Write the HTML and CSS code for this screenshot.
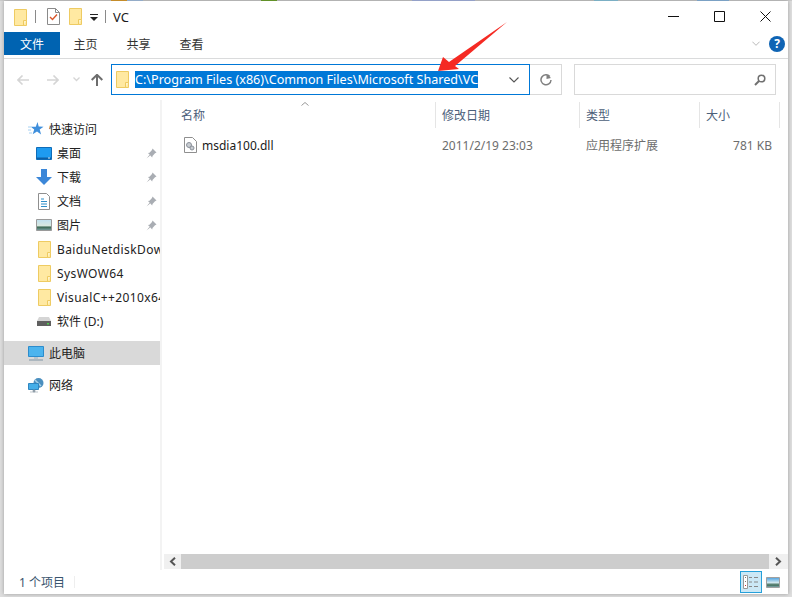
FILE: index.html
```html
<!DOCTYPE html>
<html lang="zh-CN">
<head>
    <meta charset="UTF-8">
    <title>VC</title>
    <link rel="stylesheet" href="styles.css">
</head>
<body>
    <svg class="defs" width="0" height="0">
        <symbol id="folder" viewBox="0 0 13 17">
            <path d="M.5.5h12v16H.5z" fill="#ffe9a2" stroke="#eecb62"/>
            <path d="M9.5 16.5v-5h3" fill="#fff3c8" stroke="#eecb62"/>
        </symbol>
        <symbol id="pin" viewBox="0 0 11 11">
            <path d="M6.5.5l4 4-1.500.8-2.500 2.700-.3 1.500L2 5l1.500-.3L6 2z" fill="#a9adb3"/>
            <path d="M3.500 7L.5 10.500 4 7.500z" fill="#8d9096"/>
        </symbol>
    </svg>

    <div class="window">
        <div class="titlebar">
            <svg class="qa-folder" width="13" height="17"><use href="#folder"/></svg>
            <span class="qa-sep"></span>
            <svg class="qa-doc" width="13" height="17" viewBox="0 0 13 17">
                <path d="M.5.5h8l4 4v12H.5z" fill="#fff" stroke="#8a8a8a"/>
                <path d="M8.500.5v4h4" fill="none" stroke="#8a8a8a"/>
                <path d="M3 9l2.500 2.500L10 6.500" fill="none" stroke="#d9572b" stroke-width="1.400"/>
            </svg>
            <svg class="qa-folder2" width="13" height="17"><use href="#folder"/></svg>
            <svg class="qa-drop" width="8" height="7" viewBox="0 0 8 7">
                <path d="M0 0h8v1H0zM0 3h8L4 7z" fill="#222"/>
            </svg>
            <span class="qa-sep sep2"></span>
            <span class="title">VC</span>
            <div class="winbtns">
                <span class="winbtn"><svg width="11" height="11" viewBox="0 0 11 11"><path d="M0 5.500h11" stroke="#111" fill="none"/></svg></span>
                <span class="winbtn"><svg width="11" height="11" viewBox="0 0 11 11"><path d="M.5.5h10v10H.5z" stroke="#111" fill="none"/></svg></span>
                <span class="winbtn"><svg width="11" height="11" viewBox="0 0 11 11"><path d="M.5.5l10 10M10.500.5l-10 10" stroke="#111" fill="none"/></svg></span>
            </div>
        </div>

        <div class="ribbon">
            <span class="tab tab-file">文件</span>
            <span class="tab">主页</span>
            <span class="tab">共享</span>
            <span class="tab">查看</span>
            <svg class="rib-chev" width="8" height="5" viewBox="0 0 11 6"><path d="M.5.5l5 5 5-5" fill="none" stroke="#b5b5b5" stroke-width="1.300"/></svg>
            <span class="help">?</span>
        </div>

        <div class="navrow">
            <svg class="nav-back" width="12" height="10" viewBox="0 0 12 10"><path d="M5.500.5L1 5l4.500 4.500M1 5h11" fill="none" stroke="#d5d5d5" stroke-width="1.600"/></svg>
            <svg class="nav-fwd" width="12" height="10" viewBox="0 0 12 10"><path d="M6.500.5L11 5l-4.500 4.500M11 5H0" fill="none" stroke="#d5d5d5" stroke-width="1.600"/></svg>
            <svg class="nav-hist" width="7" height="5" viewBox="0 0 7 5"><path d="M.5.500l3 3 3-3" fill="none" stroke="#d5d5d5" stroke-width="1.300"/></svg>
            <svg class="nav-up" width="12" height="12" viewBox="0 0 12 12"><path d="M.7 6L6 .8 11.300 6M6 1v11" fill="none" stroke="#6d6d6d" stroke-width="2"/></svg>
            <div class="address">
                <svg class="addr-folder" width="13" height="17"><use href="#folder"/></svg>
                <span class="addr-text">C:\Program Files (x86)\Common Files\Microsoft Shared\VC</span>
                <svg class="addr-chev" width="10" height="6" viewBox="0 0 10 6"><path d="M.5.500L5 5 9.500.5" fill="none" stroke="#555" stroke-width="1.100"/></svg>
            </div>
            <div class="refresh">
                <svg width="12" height="12" viewBox="0 0 12 12"><path d="M9.800 2.500A5 5 0 1 0 11 6" fill="none" stroke="#808080" stroke-width="1.500"/><path d="M6.500 0v5l4.500-1z" fill="#808080"/></svg>
            </div>
            <div class="search">
                <svg width="12" height="12" viewBox="0 0 12 12"><circle cx="7.500" cy="4.500" r="3.300" fill="none" stroke="#707070" stroke-width="1.500"/><path d="M5 7l-4 4" stroke="#707070" stroke-width="2"/></svg>
            </div>
        </div>

        <div class="main">
            <div class="sidebar">
                <div class="navitem top">
                    <svg width="16" height="14" viewBox="0 0 16 14"><path d="M9.500 0l1.200 4.500 4.800.2-3.800 2.900 1.400 4.900L9 9.600l-4.300 2.600 1.500-4.700L2.800 4.700h5z" fill="#3f8fdc"/><path d="M0 5h3M0 8h3M1 11h3" stroke="#a5d0f2"/></svg>
                    <span>快速访问</span>
                </div>
                <div class="navitem">
                    <svg width="16" height="13" viewBox="0 0 16 13"><path d="M.5.5h15v12H.5z" fill="#1e9bf0" stroke="#0f6cb8"/><path d="M1 10.500h14V12H1z" fill="#0d5fa5"/><path d="M12 11h2" stroke="#cfe9fb"/></svg>
                    <span>桌面</span>
                    <svg class="pin" width="11" height="11"><use href="#pin"/></svg>
                </div>
                <div class="navitem">
                    <svg width="16" height="16" viewBox="0 0 16 16"><path d="M5 0h6v8h5l-8 8-8-8h5z" fill="#3c87d8"/></svg>
                    <span>下载</span>
                    <svg class="pin" width="11" height="11"><use href="#pin"/></svg>
                </div>
                <div class="navitem">
                    <svg width="16" height="17" viewBox="0 0 16 17"><path d="M2.500.5h8l3 3v13h-11z" fill="#fff" stroke="#8f8f8f"/><path d="M5 6h3M5 8.500h6M5 11h6M5 13.500h6" stroke="#2f8fc9"/></svg>
                    <span>文档</span>
                    <svg class="pin" width="11" height="11"><use href="#pin"/></svg>
                </div>
                <div class="navitem">
                    <svg width="16" height="12" viewBox="0 0 16 12"><defs><linearGradient id="pic" x1="0" y1="0" x2="0" y2="1"><stop offset="0" stop-color="#bfe0f0"/><stop offset=".55" stop-color="#d8e8e0"/><stop offset=".7" stop-color="#3d6a55"/><stop offset="1" stop-color="#7fa3a8"/></linearGradient></defs><path d="M.5.5h15v11H.5z" fill="url(#pic)" stroke="#9a9a9a"/></svg>
                    <span>图片</span>
                    <svg class="pin" width="11" height="11"><use href="#pin"/></svg>
                </div>
                <div class="navitem">
                    <svg width="16" height="17" viewBox="0 0 16 17"><use href="#folder" x="2" width="13" height="17"/></svg>
                    <span class="latin">BaiduNetdiskDownload</span>
                </div>
                <div class="navitem">
                    <svg width="16" height="17" viewBox="0 0 16 17"><use href="#folder" x="2" width="13" height="17"/></svg>
                    <span class="latin">SysWOW64</span>
                </div>
                <div class="navitem">
                    <svg width="16" height="17" viewBox="0 0 16 17"><use href="#folder" x="2" width="13" height="17"/></svg>
                    <span class="latin">VisualC++2010x64</span>
                </div>
                <div class="navitem">
                    <svg width="16" height="9" viewBox="0 0 16 9"><path d="M3 0h10l2 4H1z" fill="#d5d5d5"/><path d="M1 4h14v5H1z" fill="#5f5f5f"/><path d="M11 6h2v1.500h-2z" fill="#4fd04f"/></svg>
                    <span>软件 (D:)</span>
                </div>
                <div class="navitem top group active">
                    <svg width="16" height="15" viewBox="0 0 16 15"><path d="M.5.500h15v10H.5z" fill="#4cb4ee" stroke="#2c8ccc"/><path d="M6 11h4v2H6z" fill="#b8c4cc"/><path d="M1 14h14" stroke="#98a8b4" stroke-width="1.400"/></svg>
                    <span>此电脑</span>
                </div>
                <div class="navitem top group">
                    <svg width="16" height="15" viewBox="0 0 16 15"><circle cx="10.500" cy="5" r="5" fill="#4b8fbf"/><path d="M7 2l6 6" stroke="#a8d2e8" stroke-width="1.500"/><path d="M.5 5.500h10v6H.5z" fill="#45aee8" stroke="#2f86c0"/><path d="M5 12h2v2H5zM2 14h8" fill="#90a0aa" stroke="#90a0aa" stroke-width=".6"/></svg>
                    <span>网络</span>
                </div>
            </div>

            <div class="content">
                <div class="colhead">
                    <svg class="sort" width="8" height="4" viewBox="0 0 8 4"><path d="M.5 3.500L4 .5l3.500 3" fill="none" stroke="#999"/></svg>
                    <span class="col col-name">名称</span>
                    <span class="col">修改日期</span>
                    <span class="col">类型</span>
                    <span class="col">大小</span>
                </div>
                <div class="filerow">
                    <span class="cell-name">
                        <svg width="13" height="16" viewBox="0 0 13 16"><path d="M.5.500h8l4 4v11H.5z" fill="#fff" stroke="#8f8f8f"/><circle cx="5" cy="8" r="2.500" fill="#c8cdd2" stroke="#8a9099"/><circle cx="8" cy="11" r="2" fill="#c8cdd2" stroke="#8a9099"/></svg>
                        msdia100.dll
                    </span>
                    <span class="cell">2011/2/19 23:03</span>
                    <span class="cell">应用程序扩展</span>
                    <span class="cell cell-size">781 KB</span>
                </div>
                <div class="hscroll">
                    <span class="sbtn"><svg width="7" height="9" viewBox="0 0 7 9"><path d="M6 .8L2 4.500 6 8.200" fill="none" stroke="#555" stroke-width="2"/></svg></span>
                    <span class="thumb"></span>
                    <span class="sbtn sbtn-r"><svg width="7" height="9" viewBox="0 0 7 9"><path d="M1 .8L5 4.500 1 8.200" fill="none" stroke="#555" stroke-width="2"/></svg></span>
                </div>
            </div>
        </div>

        <div class="statusbar">
            <span class="count">1 个项目</span>
            <span class="status-sep"></span>
            <span class="viewbtn">
                <svg width="16" height="14" viewBox="0 0 16 14"><path d="M.5.500h4v13h-4z" fill="#fff" stroke="#999"/><path d="M2 2.500h1M2 6.500h1" stroke="#777"/><path d="M2 10.500h1" stroke="#c33"/><path d="M6 2.500h3M11 2.500h4M6 7h3M11 7h4M6 11.500h3M11 11.500h4" stroke="#888"/></svg>
            </span>
            <span class="viewbtn2">
                <svg width="14" height="11" viewBox="0 0 14 11"><defs><linearGradient id="pic2" x1="0" y1="0" x2="0" y2="1"><stop offset="0" stop-color="#4aa0e0"/><stop offset=".5" stop-color="#cfe6ee"/><stop offset=".75" stop-color="#3d6a55"/><stop offset="1" stop-color="#8fb5c0"/></linearGradient></defs><path d="M.5.500h13v10H.5z" fill="url(#pic2)" stroke="#a0a0a0"/></svg>
            </span>
        </div>

        <svg class="arrow" width="80" height="60" viewBox="0 0 80 60">
            <path d="M1 50L6 36l6 5L70 1 18 45l4 3z" fill="#f52a23"/>
        </svg>
    </div>
</body>
</html>
```

FILE: styles.css
```css
html, body { height: 100%; }
body { margin: 0; overflow: hidden; background: linear-gradient(90deg, #ccc 14%, #e0a030 14% 16%, #a9c4e4 16% 18%, #ccc 18% 33%, #6fa52e 33% 35%, #ccc 35% 52%, #a9b8e4 52% 60%, #ccc 60% 75%, #8cc8e0 75% 78%, #ccc 78% 88%, #8cb8e0 88% 92%, #ccc 92%) top / 100% 1px no-repeat, #dedede; font-family: "Noto Sans", "Noto Sans CJK SC", sans-serif; font-size: 12px; color: #1a1a1a; }
.defs { position: absolute; }
svg { display: block; flex: none; }

.window { position: relative; display: flex; flex-direction: column; box-sizing: border-box; width: 784px; height: 593px; margin: 1px 0 0 4px; background: #fff; box-shadow: 0 0 4px rgba(0, 0, 0, .3); }

/* title bar */
.titlebar { display: flex; align-items: center; height: 31px; padding-left: 10px; }
.qa-folder { margin-top: 1px; }
.qa-sep { width: 1px; height: 13px; margin-left: 8px; background: #8a8a8a; }
.qa-doc { margin-left: 11px; }
.qa-folder2 { margin-left: 9px; }
.qa-drop { margin-left: 8px; margin-top: 2px; }
.sep2 { margin-left: 7px; }
.title { margin-left: 7px; font-size: 13px; }
.winbtns { display: flex; margin-left: auto; }
.winbtn { display: flex; align-items: center; justify-content: center; width: 46px; height: 31px; }

/* ribbon tabs */
.ribbon { display: flex; align-items: center; height: 23px; padding-bottom: 3px; border-bottom: 1px solid #dadbdc; }
.tab { display: flex; align-items: center; justify-content: center; width: 53px; height: 23px; color: #333; }
.tab-file { width: 56px; margin-right: -1px; background: #0063b1; color: #fff; }
.rib-chev { margin-left: auto; }
.help { width: 16px; height: 16px; margin: 0 3px 0 9px; border-radius: 50%; background: #0f64b4; color: #fff; font-weight: 700; font-size: 12px; line-height: 16px; text-align: center; }

/* address row */
.navrow { display: flex; align-items: center; height: 31px; margin-top: 5px; }
.nav-back { margin-left: 13px; }
.nav-fwd { margin-left: 18px; }
.nav-hist { margin-left: 14px; }
.nav-up { margin-left: 11px; }
.address { display: flex; align-items: center; box-sizing: border-box; width: 419px; height: 31px; margin-left: 8px; border: 1px solid #0078d7; }
.addr-folder { margin-left: 4px; }
.addr-text { margin-left: 6px; padding: 0; background: #0078d7; color: #fff; font-size: 12.6px; line-height: 17px; white-space: nowrap; }
.addr-chev { margin-left: auto; margin-right: 10px; }
.refresh { display: flex; align-items: center; justify-content: center; box-sizing: border-box; width: 32px; height: 31px; border: 1px solid #d9d9d9; border-left: 0; }
.search { display: flex; align-items: center; justify-content: flex-end; box-sizing: border-box; width: 202px; height: 31px; margin-left: 12px; padding-right: 9px; border: 1px solid #d9d9d9; }

/* main area */
.main { display: flex; flex: 1; min-height: 0; margin-top: 5px; }
.sidebar { box-sizing: border-box; width: 158px; padding-top: 17px; border-right: 2px solid #f3f3f3; }
.navitem { display: flex; align-items: center; gap: 5px; box-sizing: border-box; width: 156px; height: 24px; padding: 0 3px 0 32px; overflow: hidden; white-space: nowrap; color: #222; }
.navitem.top { padding-left: 24px; }
.navitem.group { margin-top: 8px; }
.navitem.active { background: #d9d9d9; }
.latin { letter-spacing: .4px; }
.pin { margin-left: auto; }

.content { position: relative; display: flex; flex-direction: column; flex: 1; min-width: 0; }
.colhead { display: grid; grid-template-columns: 274px 144px 120px 80px; height: 26px; margin: 2px 0 4px; color: #4c607a; }
.col { display: flex; align-items: center; padding-left: 6px; border-right: 1px solid #e5e5e5; }
.col-name { padding-left: 19px; }
.sort { position: absolute; left: 139px; top: 2px; }
.filerow { display: grid; grid-template-columns: 274px 144px 120px 80px; align-items: center; height: 26px; color: #6d6d6d; }
.cell-name { display: flex; align-items: center; gap: 5px; padding-left: 22px; color: #1a1a1a; }
.cell { padding-left: 6px; }
.cell-size { padding: 0 8px 0 0; text-align: right; }

.hscroll { display: flex; height: 15px; margin: auto 0 1px 2px; background: #f0f0f0; }
.sbtn { display: flex; align-items: center; justify-content: center; width: 17px; }
.sbtn-r { width: 19px; }
.thumb { flex: 1; background: #cdcdcd; }

/* status bar */
.statusbar { display: flex; align-items: center; height: 24px; padding-left: 15px; color: #39546e; }
.status-sep { width: 1px; height: 12px; margin-left: 9px; background: #eee; }
.viewbtn { display: flex; align-items: center; justify-content: center; box-sizing: border-box; width: 22px; height: 22px; margin-left: auto; border: 1px solid #26a0da; background: #cbe8f6; }
.viewbtn2 { margin: 0 8px 0 4px; }

/* red annotation drawn on the screenshot */
.arrow { position: absolute; left: 433px; top: 20px; }
```
